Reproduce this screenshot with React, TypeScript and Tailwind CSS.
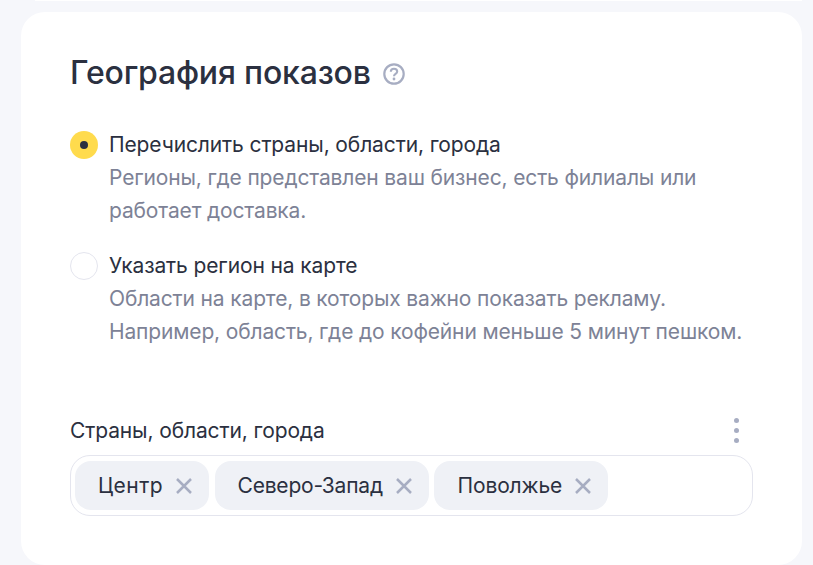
const sans = 'font-["Inter",sans-serif]'

const regions = [
  { name: 'Центр', text: 'tracking-[0.45px]' },
  { name: 'Северо-Запад', text: 'tracking-[-0.2px]' },
  { name: 'Поволжье', text: 'tracking-[-0.12px]' },
]

function Radio({ checked }: { checked?: boolean }) {
  if (checked) {
    return (
      <span className="flex h-[28px] w-[28px] shrink-0 items-center justify-center rounded-full bg-[#ffdb4d]">
        <span className="h-[8px] w-[8px] rounded-full bg-[#2b3040]" />
      </span>
    )
  }
  return <span className="h-[28px] w-[28px] shrink-0 rounded-full border border-[#e4e5ee] bg-white" />
}

function Option({ checked, title, lines }: { checked?: boolean; title: string; lines: string[] }) {
  return (
    <div className="flex gap-[11px]">
      <Radio checked={checked} />
      <div>
        <div className="text-[21px] leading-[28px] tracking-[-0.12px] text-[#2b3040]">{title}</div>
        <div className="mt-[2px] text-[21px] leading-[33px] tracking-[-0.15px] text-[#7d8296]">
          {lines.map((line) => (
            <div key={line}>{line}</div>
          ))}
        </div>
      </div>
    </div>
  )
}

export default function App() {
  return (
    <div className={`h-[565px] w-[813px] overflow-hidden bg-[#f6f7fb] ${sans}`}>
      <div className="ml-[35px] mr-[11px] h-[1px] bg-white" />
      <div className="ml-[21px] mr-[11px] mt-[11px] h-[553px] rounded-[24px] bg-white px-[49px] pt-[41px]">
        <div className="flex items-center gap-[12px]">
          <h1 className="text-[32px] font-medium leading-[40px] tracking-[-0.18px] text-[#2b3040]">География показов</h1>
          <svg width="22" height="22" viewBox="0 0 22 22" fill="none" className="mt-[2px]">
            <circle cx="11" cy="11" r="9.7" stroke="#a7adc2" strokeWidth="2.2" />
            <path d="M7.8 8.8c0-1.8 1.4-3 3.2-3s3.2 1.1 3.2 2.8c0 2.4-3.2 2.3-3.2 4.6" stroke="#a7adc2" strokeWidth="2.1" />
            <circle cx="11" cy="16" r="1.4" fill="#a7adc2" />
          </svg>
        </div>
        <div className="mt-[38px] flex flex-col gap-[25px]">
          <Option
            checked
            title="Перечислить страны, области, города"
            lines={['Регионы, где представлен ваш бизнес, есть филиалы или', 'работает доставка.']}
          />
          <Option
            title="Указать регион на карте"
            lines={[
              'Области на карте, в которых важно показать рекламу.',
              'Например, область, где до кофейни меньше 5 минут пешком.',
            ]}
          />
        </div>
        <div className="mt-[69px] flex items-center justify-between">
          <span className="text-[21px] leading-[28px] tracking-[-0.12px] text-[#2b3040]">Страны, области, города</span>
          <span className="mb-[1px] mr-[14px] flex flex-col gap-[4.67px]">
            <span className="h-[5px] w-[5px] rounded-full bg-[#a7adc2]" />
            <span className="h-[5px] w-[5px] rounded-full bg-[#a7adc2]" />
            <span className="h-[5px] w-[5px] rounded-full bg-[#a7adc2]" />
          </span>
        </div>
        <div className="mt-[10px] flex h-[61px] items-center gap-[5.5px] rounded-[20px] border border-[#e4e5ee] px-[4px]">
          {regions.map((region) => (
            <div
              key={region.name}
              className="flex h-[49px] items-center gap-[13px] rounded-[16px] bg-[#eff1f6] pl-[23px] pr-[17px]"
            >
              <span className={`text-[21px] text-[#2b3040] ${region.text}`}>{region.name}</span>
              <svg width="16" height="16" viewBox="0 0 16 16" fill="none" stroke="#a7adc2" strokeWidth="2.5">
                <path d="M1 1l14 14M15 1L1 15" />
              </svg>
            </div>
          ))}
        </div>
      </div>
    </div>
  )
}
